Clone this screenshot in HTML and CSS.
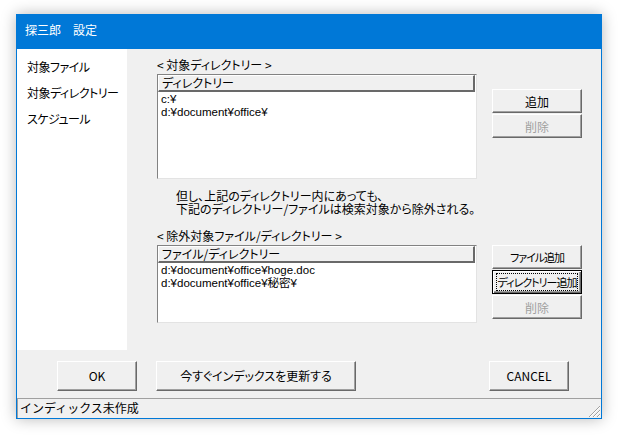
FILE: index.html
```html
<!DOCTYPE html>
<html lang="ja">
<head>
<meta charset="utf-8">
<title>探三郎 設定</title>
<link rel="stylesheet" href="styles.css">
</head>
<body>
<div class="window">
  <div class="titlebar">探三郎　設定</div>
  <div class="main">
    <div class="nav">
      <div class="nav-item">対象ファイル</div>
      <div class="nav-item">対象ディレクトリー</div>
      <div class="nav-item">スケジュール</div>
    </div>
    <div class="content">
      <div class="section section1">
        <div class="col-list">
          <div class="label">&lt; 対象ディレクトリー &gt;</div>
          <div class="listbox dirs">
            <div class="list-header">ディレクトリー</div>
            <div class="list-items">
              <div class="item">c:¥</div>
              <div class="item">d:¥document¥office¥</div>
            </div>
          </div>
        </div>
        <div class="col-buttons">
          <div class="btn">追加</div>
          <div class="btn disabled">削除</div>
        </div>
      </div>
      <p class="note">但し、上記のディレクトリー内にあっても、<br>下記のディレクトリー/ファイルは検索対象から除外される。</p>
      <div class="section section2">
        <div class="col-list">
          <div class="label">&lt; 除外対象ファイル/ディレクトリー &gt;</div>
          <div class="listbox excl">
            <div class="list-header">ファイル/ディレクトリー</div>
            <div class="list-items">
              <div class="item">d:¥document¥office¥hoge.doc</div>
              <div class="item">d:¥document¥office¥秘密¥</div>
            </div>
          </div>
        </div>
        <div class="col-buttons">
          <div class="btn narrow">ファイル追加</div>
          <div class="btn focused"><div class="focus-rect narrow">ディレクトリー追加</div></div>
          <div class="btn disabled">削除</div>
        </div>
      </div>
    </div>
  </div>
  <div class="bottom">
    <div class="btn big ok">OK</div>
    <div class="btn big update">今すぐインデックスを更新する</div>
    <div class="btn big cancel">CANCEL</div>
  </div>
  <div class="statusbar">
    <div class="status-text">インディックス未作成</div>
    <svg class="grip" width="13" height="13" viewBox="0 0 13 13">
      <g stroke-width="1">
        <line x1="12" y1="1" x2="1" y2="12" stroke="#a0a0a0"/>
        <line x1="12" y1="2" x2="2" y2="12" stroke="#ffffff"/>
        <line x1="12" y1="5" x2="5" y2="12" stroke="#a0a0a0"/>
        <line x1="12" y1="6" x2="6" y2="12" stroke="#ffffff"/>
        <line x1="12" y1="9" x2="9" y2="12" stroke="#a0a0a0"/>
        <line x1="12" y1="10" x2="10" y2="12" stroke="#ffffff"/>
      </g>
    </svg>
  </div>
</div>
</body>
</html>
```
FILE: styles.css
```css
* { box-sizing: border-box; }
body {
  margin: 0;
  width: 620px;
  height: 440px;
  background: #ffffff;
  overflow: hidden;
  font-family: "Noto Sans CJK JP", sans-serif;
  color: #000;
}
.window {
  margin: 14px 0 0 16px;
  width: 586px;
  height: 405px;
  border: 1px solid #0078d7;
  border-top: 0;
  background: #f0f0f0;
  box-shadow: 0 0 14px rgba(0, 0, 0, 0.28);
  display: flex;
  flex-direction: column;
}
.titlebar {
  height: 35px;
  flex: none;
  background: #0078d7;
  color: #fff;
  font-size: 12px;
  line-height: 32px;
  padding-left: 8px;
}
.main {
  display: flex;
  height: 301px;
  flex: none;
}
.nav {
  width: 110px;
  background: #fff;
  padding: 5px 0 0 10px;
  font-size: 12px;
  letter-spacing: -0.5px;
  font-feature-settings: "palt";
}
.nav-item {
  height: 26px;
  line-height: 26px;
  white-space: nowrap;
}
.content {
  flex: 1;
  padding: 8px 0 0 30px;
  font-size: 12px;
  font-feature-settings: "palt";
}
.section {
  display: flex;
  gap: 15px;
}
.section2 { margin-top: 13px; }
.col-list { width: 320px; }
.label {
  line-height: 15px;
  margin-bottom: 2px;
  white-space: nowrap;
}
.listbox {
  background: #fff;
  border: 1px solid;
  border-color: #828282 #e3e3e3 #e3e3e3 #828282;
}
.listbox.dirs { height: 105px; }
.listbox.excl { height: 78px; }
.list-header {
  height: 17px;
  margin-right: 1px;
  border-style: solid;
  border-width: 1px 2px 2px 1px;
  border-color: #ffffff #696969 #696969 #ffffff;
  background: #f0f0f0;
  line-height: 14px;
  padding-left: 3px;
}
.list-items {
  padding: 1px 0 0 3px;
  line-height: 13px;
  font-family: "Liberation Sans", "Noto Sans CJK JP", sans-serif;
  font-size: 11.5px;
  font-feature-settings: normal;
}
.col-buttons {
  width: 90px;
  display: flex;
  flex-direction: column;
  gap: 1px;
}
.section1 .col-buttons { margin-top: 32px; }
.section2 .col-buttons { margin-top: 17px; }
.btn {
  height: 24px;
  background: #f0f0f0;
  border: 1px solid;
  border-color: #ffffff #696969 #696969 #ffffff;
  box-shadow: inset -1px -1px #a0a0a0;
  display: flex;
  align-items: center;
  justify-content: center;
  font-size: 12px;
  font-feature-settings: "palt";
  white-space: nowrap;
}
.btn.disabled { color: #a0a0a0; }
.narrow { font-size: 11px; letter-spacing: -1px; }
.btn.focused {
  border-color: #000;
  box-shadow: inset 1px 1px #ffffff, inset -1px -1px #696969, inset -2px -2px #a0a0a0;
  align-items: stretch;
  padding: 2px 3px;
}
.focus-rect {
  flex: 1;
  border: 1px dotted #000;
  display: flex;
  align-items: center;
  justify-content: center;
}
.note {
  margin: 10px 0 0;
  padding-left: 19px;
  line-height: 13px;
  white-space: nowrap;
}
.bottom {
  height: 48px;
  flex: none;
  display: flex;
  align-items: flex-start;
  padding: 11px 0 0 40px;
}
.btn.big { height: 30px; padding-bottom: 2px; }
.ok { width: 80px; margin-right: 19px; }
.update { width: 200px; margin-right: 133px; }
.cancel { width: 80px; }
.statusbar {
  flex: 1;
  border-top: 1px solid #a0a0a0;
  display: flex;
  justify-content: space-between;
  align-items: flex-end;
}
.status-text {
  align-self: stretch;
  border-left: 1px solid #a0a0a0;
  font-size: 12px;
  line-height: 17px;
  padding-left: 2px;
}
.grip { flex: none; display: block; }
```
